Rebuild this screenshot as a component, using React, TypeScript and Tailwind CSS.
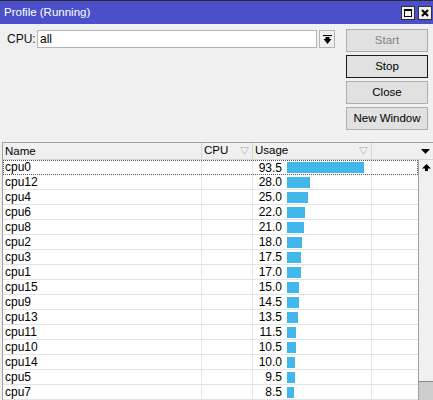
import React from 'react';

// Profile window rows (name, usage %)
const rows: [string, number][] = [
  ['cpu0', 93.5],
  ['cpu12', 28.0],
  ['cpu4', 25.0],
  ['cpu6', 22.0],
  ['cpu8', 21.0],
  ['cpu2', 18.0],
  ['cpu3', 17.5],
  ['cpu1', 17.0],
  ['cpu15', 15.0],
  ['cpu9', 14.5],
  ['cpu13', 13.5],
  ['cpu11', 11.5],
  ['cpu10', 10.5],
  ['cpu14', 10.0],
  ['cpu5', 9.5],
  ['cpu7', 8.5],
];

const SortIcon = () => (
  <svg width="9" height="8" viewBox="0 0 9 8" className="shrink-0">
    <path d="M0.5 0.5 H8.5 L4.5 7.5 Z" fill="none" stroke="#c4c4c4" strokeWidth="1" />
  </svg>
);

const WinButton = ({ label, disabled, focused }: { label: string; disabled?: boolean; focused?: boolean }) => (
  <div
    className={`h-[23px] w-[82px] flex items-center justify-center bg-[#e1e1e1] text-[11.5px] ${
      focused ? 'border border-[#1a1a1a]' : 'border border-[#adadad]'
    } ${disabled ? 'text-[#838383]' : 'text-black'}`}
  >
    {label}
  </div>
);

export default function App() {
  return (
    <div
      className="w-[433px] h-[400px] overflow-hidden bg-[#f0f0f0] flex flex-col"
      style={{ fontFamily: '"Liberation Sans", Arial, sans-serif' }}
    >
      {/* title bar */}
      <div className="h-[24px] shrink-0 border-t border-[#2a2a2a] bg-[#4b4fca] flex items-center pl-[4px] pr-[1px]">
        <span className="text-white text-[11.5px] flex-1">Profile (Running)</span>
        <div className="flex gap-[3px]">
          <div className="w-[14px] h-[14px] bg-[#f0f0f0] border border-[#333] flex items-center justify-center">
            <div className="w-[8px] h-[8px] border border-black border-t-2" />
          </div>
          <div className="w-[14px] h-[14px] bg-[#f0f0f0] border border-[#333] flex items-center justify-center">
            <svg width="8" height="8" viewBox="0 0 8 8">
              <path d="M1 1 L7 7 M7 1 L1 7" stroke="#000" strokeWidth="2" />
            </svg>
          </div>
        </div>
      </div>

      {/* form */}
      <div className="h-[118px] shrink-0 flex pt-[5px]">
        <div className="flex items-start pl-[7px] pt-[1px] w-[339px]">
          <span className="text-[12px] text-[#111] leading-[18px] w-[30px]">CPU:</span>
          <div className="h-[18px] w-[280px] bg-white border border-[#b4b4b4] text-[12px] leading-[16px] pl-[2px] text-black">
            all
          </div>
          <div className="ml-[2px] h-[18px] w-[16px] bg-[#f0f0f0] border border-[#b4b4b4] flex items-center justify-center">
            <svg width="9" height="9" viewBox="0 0 9 9">
              <path d="M0 0.5 H9" stroke="#000" strokeWidth="1.2" />
              <path d="M4.5 9 L0.5 4 H2.5 V2 H6.5 V4 H8.5 Z" fill="#000" />
            </svg>
          </div>
        </div>
        <div className="flex flex-col gap-[3px] pl-[7px]">
          <WinButton label="Start" disabled />
          <WinButton label="Stop" focused />
          <WinButton label="Close" />
          <WinButton label="New Window" />
        </div>
      </div>

      {/* table */}
      <div className="flex-1 ml-[2px] border-l border-t border-[#a0a0a0] flex flex-col text-[12px] text-black">
        <div className="h-[17px] shrink-0 flex border-b border-[#d5d5d5] bg-[#f0f0f0] text-[11.5px]">
          <div className="w-[199px] pl-[2px] leading-[17px] border-r border-[#d5d5d5]">Name</div>
          <div className="w-[51px] pl-[2px] pr-[3px] flex items-center justify-between border-r border-[#d5d5d5]">
            <span>CPU</span>
            <SortIcon />
          </div>
          <div className="w-[119px] pl-[2px] pr-[3px] flex items-center justify-between border-r border-[#d5d5d5]">
            <span>Usage</span>
            <SortIcon />
          </div>
          <div className="w-[46px]" />
          <div className="w-[15px] flex items-center justify-center">
            <svg width="9" height="5" viewBox="0 0 9 5">
              <path d="M0 0 H9 L4.5 5 Z" fill="#000" />
            </svg>
          </div>
        </div>
        <div className="flex flex-1">
          <div className="w-[415px] bg-white flex flex-col">
            {rows.map(([name, v], i) => (
              <div
                key={name}
                className={`h-[15px] shrink-0 flex ${
                  i === 0 ? 'outline outline-1 outline-dotted outline-[#555] -outline-offset-1' : 'border-b border-[#e3e3e3]'
                }`}
              >
                <div className="w-[199px] pl-[2px] leading-[14px] border-r border-[#e6e6e6]">{name}</div>
                <div className="w-[51px] border-r border-[#e6e6e6]" />
                <div className="w-[119px] flex items-center border-r border-[#e6e6e6]">
                  <span className="w-[29px] text-right leading-[14px]">{v.toFixed(1)}</span>
                  <div className="ml-[5px] h-[11px] bg-[#41b7ec]" style={{ width: Math.round(v * 0.825) }} />
                </div>
                <div className="w-[46px]" />
              </div>
            ))}
          </div>
          <div className="w-[15px] border-l border-[#a0a0a0] bg-[#f0f0f0] flex flex-col">
            <div className="h-[15px] flex items-center justify-center">
              <svg width="9" height="7" viewBox="0 0 9 7">
                <path d="M4.5 0 L9 4.5 H6 V7 H3 V4.5 H0 Z" fill="#000" />
              </svg>
            </div>
            <div className="flex-1" />
            <div className="h-[19px] bg-[#cdcdcd] border-t border-[#8a8a8a]" />
          </div>
        </div>
      </div>
    </div>
  );
}
